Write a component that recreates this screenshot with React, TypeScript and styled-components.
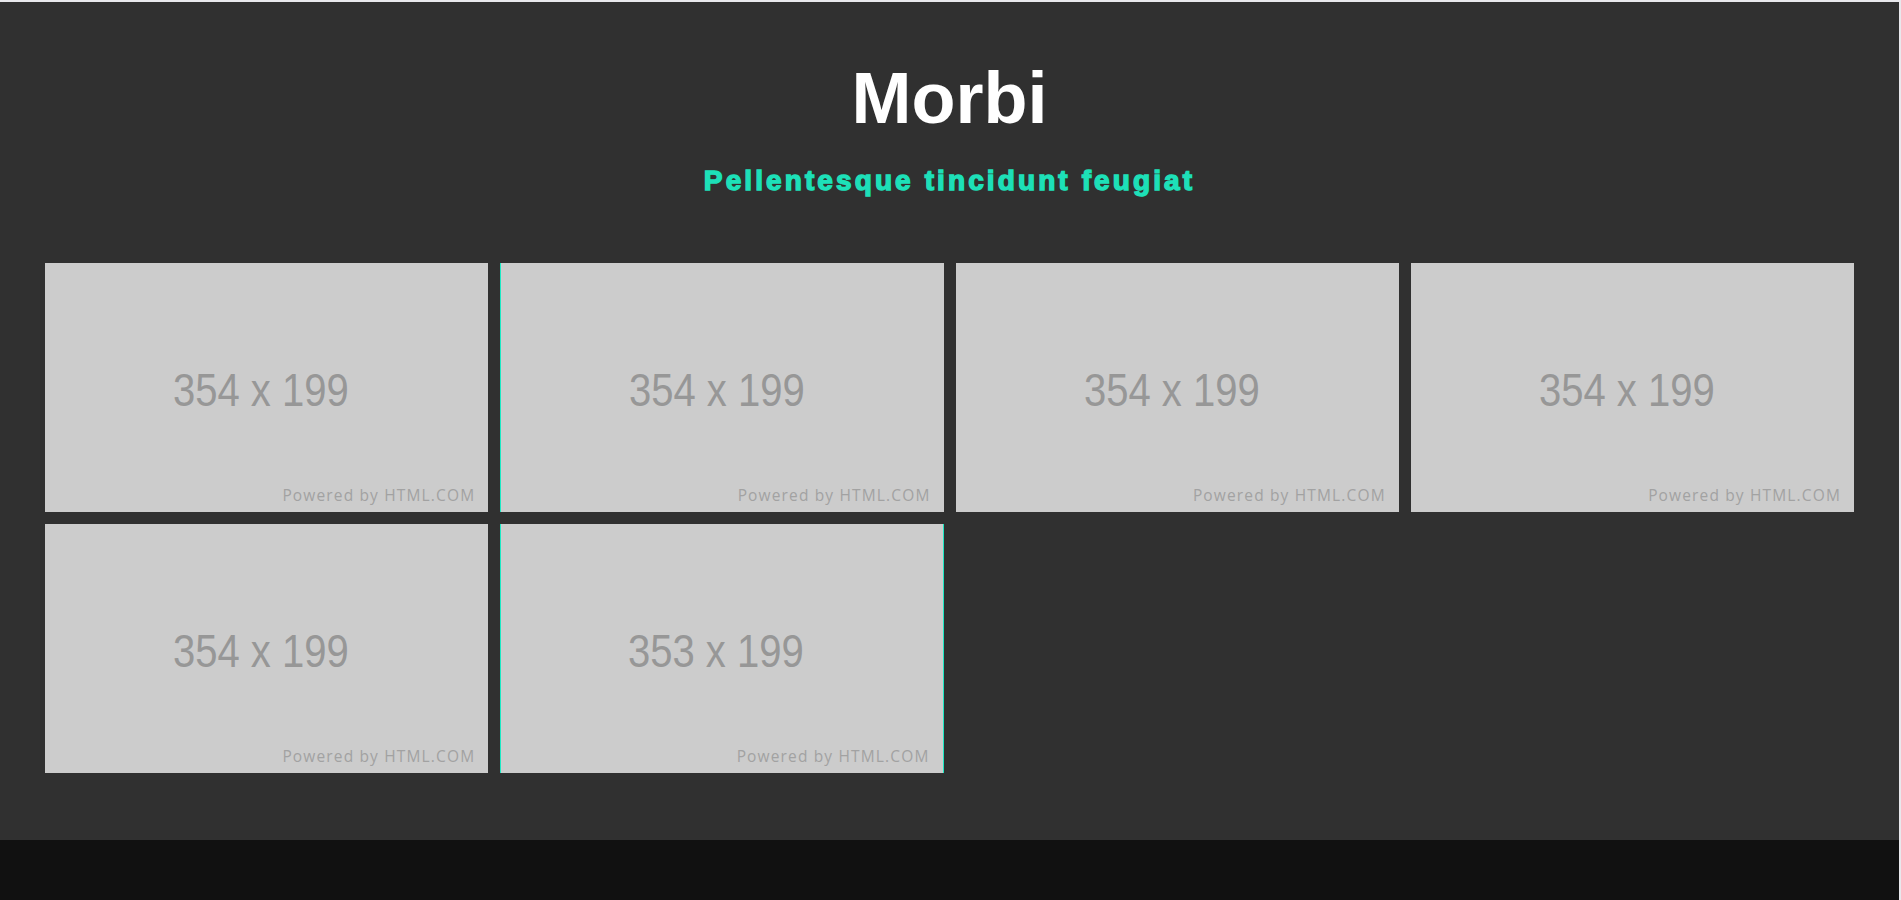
import React from "react";
import styled, { createGlobalStyle } from "styled-components";

const GlobalStyle = createGlobalStyle`
  html, body {
    margin: 0;
    padding: 0;
    background: #e8e8ec;
    overflow: hidden;
  }
  #root {
    padding: 2px 2px 0 0;
  }
  * { box-sizing: border-box; }
`;

const Page = styled.div`
  display: flex;
  flex-direction: column;
  font-family: "Liberation Sans", Arial, sans-serif;
`;

const Section = styled.section`
  background: #303030;
  padding: 55px 45px 67px;
  display: flex;
  flex-direction: column;
  align-items: stretch;
`;

const Header = styled.header`
  display: flex;
  flex-direction: column;
  align-items: center;
  margin-bottom: 66px;
`;

const Title = styled.h1`
  margin: 0 0 26px;
  font-size: 72px;
  font-weight: 700;
  line-height: normal;
  color: #ffffff;
`;

const Subtitle = styled.h2`
  margin: 0;
  font-size: 28px;
  font-weight: 700;
  line-height: normal;
  letter-spacing: 3.1px;
  color: #1de0b8;
  -webkit-text-stroke: 1.4px #1de0b8;
`;

const Grid = styled.div`
  display: grid;
  grid-template-columns: repeat(4, 1fr);
  gap: 12px;
`;

const Tile = styled.div<{ $accentLeft?: boolean; $accentRight?: boolean }>`
  aspect-ratio: 354 / 199;
  background: #cccccc;
  display: grid;
  grid-template: 1fr / 1fr;
  border-left: ${(p) => (p.$accentLeft ? "1px solid #1de9c4" : "0")};
  border-right: ${(p) => (p.$accentRight ? "1px solid #1de9c4" : "0")};
  overflow: hidden;
`;

const Size = styled.span`
  grid-area: 1 / 1;
  place-self: center;
  padding-right: 13px;
  margin-top: 4px;
  font-family: "Liberation Sans", Arial, sans-serif;
  font-size: 46px;
  color: #979797;
  transform: scaleX(0.87);
`;

const Powered = styled.span`
  grid-area: 1 / 1;
  align-self: end;
  justify-self: end;
  margin: 0 13px 6px 0;
  font-family: "Open Sans", sans-serif;
  font-size: 15.5px;
  letter-spacing: 1.15px;
  color: #a2a2a2;
`;

const Footer = styled.footer`
  background: #111111;
  height: 80px;
`;

const tiles = [
  { label: "354 x 199" },
  { label: "354 x 199", left: true },
  { label: "354 x 199" },
  { label: "354 x 199" },
  { label: "354 x 199" },
  { label: "353 x 199", left: true, right: true },
];

export default function App() {
  return (
    <>
      <GlobalStyle />
      <Page>
        <Section>
          <Header>
            <Title>Morbi</Title>
            <Subtitle>Pellentesque tincidunt feugiat</Subtitle>
          </Header>
          <Grid>
            {tiles.map((t, i) => (
              <Tile key={i} $accentLeft={t.left} $accentRight={t.right}>
                <Size>{t.label}</Size>
                <Powered>Powered by HTML.COM</Powered>
              </Tile>
            ))}
          </Grid>
        </Section>
        <Footer />
      </Page>
    </>
  );
}
